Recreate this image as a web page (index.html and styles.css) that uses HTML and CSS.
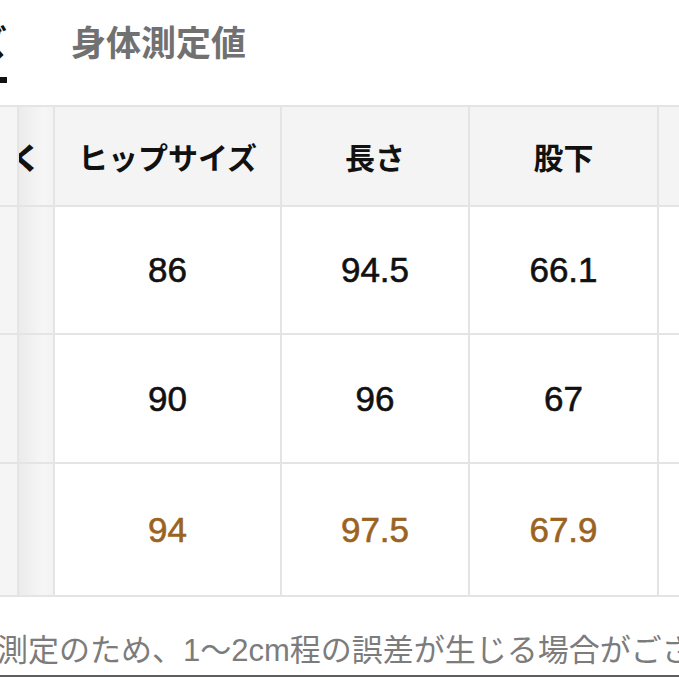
FILE: index.html
```html
<!DOCTYPE html>
<html lang="ja">
<head>
<meta charset="utf-8">
<title>身体測定値</title>
<link rel="stylesheet" href="styles.css">
</head>
<body>
<div class="page">
  <div class="tabs">
    <div class="tab tab-active"><span class="tab-label">商品サイズ</span></div>
    <div class="tab tab-inactive">身体測定値</div>
  </div>
  <div class="table-wrap">
    <table class="size-table">
      <colgroup>
        <col class="c0"><col class="c1"><col class="c2"><col class="c3"><col class="c4"><col class="c5">
      </colgroup>
      <thead>
        <tr class="head-row">
          <th class="stick0"></th>
          <th class="stick1"><span class="clip-glyph">く</span></th>
          <th>ヒップサイズ</th>
          <th>長さ</th>
          <th>股下</th>
          <th></th>
        </tr>
      </thead>
      <tbody>
        <tr class="row1">
          <td class="stick0"></td><td class="stick1"></td>
          <td>86</td><td>94.5</td><td>66.1</td><td></td>
        </tr>
        <tr class="row2">
          <td class="stick0"></td><td class="stick1"></td>
          <td>90</td><td>96</td><td>67</td><td></td>
        </tr>
        <tr class="row3 accent">
          <td class="stick0"></td><td class="stick1"></td>
          <td>94</td><td>97.5</td><td>67.9</td><td></td>
        </tr>
      </tbody>
    </table>
  </div>
  <p class="note">測定のため、1〜2cm程の誤差が生じる場合がございます。</p>
  <div class="bottom-bar"></div>
</div>
</body>
</html>
```

FILE: styles.css
```css
* { box-sizing: border-box; }
html, body { margin: 0; padding: 0; background: #fff; }
body {
  width: 679px;
  height: 679px;
  overflow: hidden;
  font-family: "Liberation Sans", "Noto Sans CJK JP", sans-serif;
}
.page { width: 679px; overflow: hidden; }

.tabs {
  display: flex;
  align-items: flex-start;
  height: 105px;
  gap: 64px;
}
.tab {
  font-family: "Noto Sans CJK JP", sans-serif;
  font-weight: 700;
  font-size: 35px;
  line-height: 35px;
  white-space: nowrap;
  padding-top: 23px;
}
.tab-active {
  width: 200px;
  margin-left: -193px;
  text-align: right;
  color: #111;
}
.tab-label {
  display: inline-block;
  padding-bottom: 19px;
  border-bottom: 6px solid #111;
}
.tab-inactive { color: #717171; }

.table-wrap {
  width: 679px;
  overflow: hidden;
  border-top: 2px solid #e4e4e4;
}
.size-table {
  table-layout: fixed;
  border-collapse: separate;
  border-spacing: 0;
  width: 759px;
}
.c0 { width: 19px; }
.c1 { width: 36px; }
.c2 { width: 227px; }
.c3 { width: 188px; }
.c4 { width: 189px; }
.c5 { width: 100px; }

.size-table th,
.size-table td {
  border-right: 2px solid #e4e4e4;
  border-bottom: 2px solid #e4e4e4;
  padding: 0;
  text-align: center;
  vertical-align: middle;
  overflow: hidden;
  white-space: nowrap;
}
.size-table th {
  background: #f4f4f4;
  font-family: "Noto Sans CJK JP", sans-serif;
  font-weight: 700;
  font-size: 30px;
  color: #111;
}
.size-table td {
  background: #fff;
  font-size: 35px;
  color: #111;
  -webkit-text-stroke: 0.6px currentColor;
}
.head-row th { height: 100px; }
.row1 td { height: 128px; }
.row2 td { height: 129px; }
.row3 td { height: 133px; }
.accent td { color: #9b6322; }

.size-table .stick0 { background: #f5f5f5; }
.size-table .stick1 {
  background: linear-gradient(to right, #ebebeb, #f6f6f6 70%, #f3f3f3);
  text-align: left;
}
.clip-glyph {
  display: inline-block;
  margin-left: -8px;
  font-weight: 900;
}

.note {
  margin: 34px 0 4px -3px;
  font-family: "Liberation Sans", "Noto Sans CJK JP", sans-serif;
  font-size: 31px;
  line-height: 40px;
  color: #7c7c7c;
  white-space: nowrap;
}
.bottom-bar {
  height: 2px;
  background: #5e5e5e;
}
```
